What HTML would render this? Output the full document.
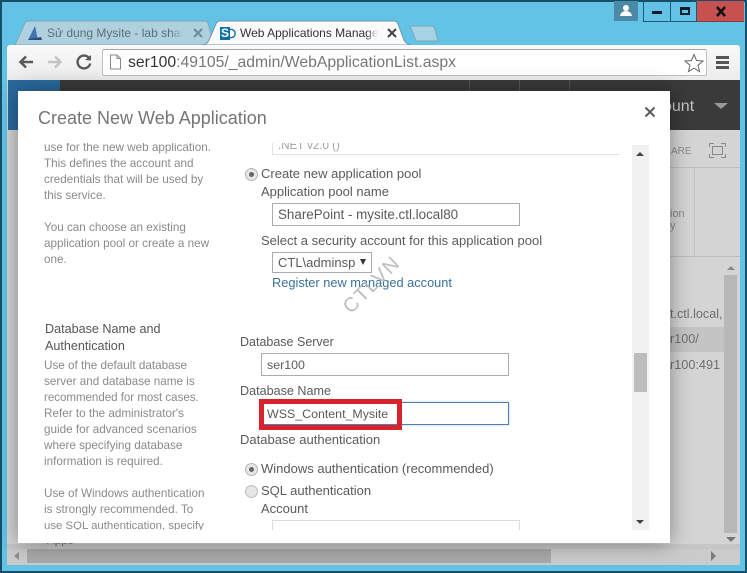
<!DOCTYPE html>
<html><head><meta charset="utf-8">
<style>
html,body{margin:0;padding:0;width:747px;height:573px;overflow:hidden;background:#62c3e6;}
*{box-sizing:border-box;}
body{font-family:"Liberation Sans","DejaVu Sans",sans-serif;position:relative;}
.a{position:absolute;}
.t{position:absolute;white-space:nowrap;font-size:12px;line-height:16px;color:#555;}
.d{color:#8a8a8a;font-size:11.7px;left:44px;}
.f{color:#5a5a5a;font-size:13px;}
.i{position:absolute;background:#fff;border:1px solid #ababab;}
</style></head><body>
<!-- window frame -->
<div class="a" style="left:0;top:0;width:747px;height:2px;background:#174e68"></div>
<div class="a" style="left:0;top:0;width:2px;height:573px;background:#174e68"></div>
<div class="a" style="right:0;top:0;width:2px;height:573px;background:#174e68"></div>
<div class="a" style="left:0;bottom:0;width:747px;height:2px;background:#174e68"></div>

<!-- window controls -->
<div class="a" style="left:614px;top:1px;width:24px;height:20px;background:#4b8aa6"></div>
<svg class="a" style="left:619px;top:4px" width="14" height="12" viewBox="0 0 14 12"><circle cx="7" cy="4" r="3" fill="#fff"/><path d="M1 12 Q2 7 7 7 Q12 7 13 12Z" fill="#fff"/></svg>
<div class="a" style="left:643px;top:1px;width:28px;height:21px;border:1px solid #1d5a78;border-top:0"></div>
<div class="a" style="left:652px;top:11px;width:10px;height:3px;background:#0f1e2c"></div>
<div class="a" style="left:671px;top:1px;width:26px;height:21px;border:1px solid #1d5a78;border-top:0;border-left:0"></div>
<div class="a" style="left:680px;top:7px;width:10px;height:8px;border:2px solid #0f1e2c;border-top-width:3px"></div>
<div class="a" style="left:697px;top:1px;width:47px;height:21px;background:#c75050;border-bottom:1px solid #8c3a3a"></div>
<svg class="a" style="left:715px;top:6px" width="12" height="11" viewBox="0 0 12 11"><path d="M2 1 L10 10 M10 1 L2 10" stroke="#111" stroke-width="2.6"/></svg>

<!-- tabs -->
<svg class="a" style="left:0;top:18px" width="450" height="30" viewBox="0 0 450 30">
<path d="M15 27 L25 5 Q26 3 29 3 L204 3 Q207 3 208 5 L214 27Z" fill="#aed0df" stroke="#7fa9bc"/>
<path d="M202 27 Q207 27 209 22 L216 6 Q217 3 220 3 L394 3 Q397 3 398 6 L404 22 Q406 26 411 27Z" fill="#fafafa" stroke="#6c96a9"/>
<path d="M411 10 Q408 8 412 8 L431 8 Q434 8 435 11 L438 23 L416 23Z" fill="#a6d2e4" stroke="#7ba7ba"/>
</svg>
<svg class="a" style="left:27px;top:25px" width="16" height="16" viewBox="0 0 16 16"><path d="M1 15 L8 1 L15 15Z" fill="#3f74b0"/><path d="M8 1 L11 15 L15 15Z" fill="#b9cfe6"/><path d="M2 14 L14 12 L15 15 L1 15Z" fill="#28507f"/></svg>
<div class="t" style="left:47px;top:25px;width:136px;overflow:hidden;font-size:12px;color:#5f6f78">Sử dụng Mysite - lab shar</div>
<div class="a" style="left:171px;top:25px;width:12px;height:16px;background:linear-gradient(90deg,rgba(174,208,223,0),#aed0df)"></div>
<svg class="a" style="left:193px;top:28px" width="10" height="10" viewBox="0 0 10 10"><path d="M1 1 L9 9 M9 1 L1 9" stroke="#6f8b99" stroke-width="2"/></svg>
<svg class="a" style="left:220px;top:27px" width="16" height="13" viewBox="0 0 16 13"><circle cx="11" cy="6.5" r="4.2" fill="#fff" stroke="#0f6fa8" stroke-width="1.4"/><rect x="0" y="0" width="10" height="13" fill="#0f6fa8"/></svg>
<div class="t" style="left:221px;top:25px;font-size:12px;font-weight:bold;color:#fff;line-height:16px">S</div>
<div class="t" style="left:240px;top:25px;width:138px;overflow:hidden;font-size:12px;color:#333">Web Applications Manage</div>
<div class="a" style="left:366px;top:25px;width:12px;height:16px;background:linear-gradient(90deg,rgba(250,250,250,0),#fafafa)"></div>
<svg class="a" style="left:387px;top:28px" width="10" height="10" viewBox="0 0 10 10"><path d="M1 1 L9 9 M9 1 L1 9" stroke="#444" stroke-width="2"/></svg>

<!-- toolbar -->
<div class="a" style="left:7px;top:45px;width:733px;height:35px;background:linear-gradient(#fafafa,#ececec);border-radius:3px 3px 0 0"></div>
<svg class="a" style="left:17px;top:53px" width="18" height="18" viewBox="0 0 18 18"><path d="M16 9 H4 M9 3.5 L3.5 9 L9 14.5" stroke="#5a5a5a" stroke-width="2.6" fill="none"/></svg>
<svg class="a" style="left:46px;top:53px" width="18" height="18" viewBox="0 0 18 18"><path d="M2 9 H14 M9 3.5 L14.5 9 L9 14.5" stroke="#c4c4c4" stroke-width="2.6" fill="none"/></svg>
<svg class="a" style="left:75px;top:53px" width="18" height="18" viewBox="0 0 18 18"><path d="M14 5 A6.4 6.4 0 1 0 15.2 10.5" stroke="#5a5a5a" stroke-width="2.4" fill="none"/><path d="M10 7 L16 7.5 L16 2Z" fill="#5a5a5a"/></svg>
<div class="a" style="left:102px;top:49px;width:605px;height:27px;background:#fff;border:1px solid #c0c0c0;border-top-color:#a5a5a5;border-radius:2px"></div>
<svg class="a" style="left:109px;top:54px" width="13" height="16" viewBox="0 0 13 16"><path d="M1.5 1 H8 L11.5 4.5 V15 H1.5Z M8 1 V4.5 H11.5" fill="#fff" stroke="#8a8a8a"/></svg>
<div class="t" style="left:128px;top:53px;font-size:15.75px;line-height:19px;color:#777"><span style="color:#333">ser100</span>:49105/_admin/WebApplicationList.aspx</div>
<svg class="a" style="left:684px;top:53px" width="20" height="20" viewBox="0 0 20 20"><path d="M10 1.5 L12.5 7.5 L19 8 L14 12.2 L15.6 18.6 L10 15.2 L4.4 18.6 L6 12.2 L1 8 L7.5 7.5Z" fill="#fff" stroke="#666"/></svg>
<div class="a" style="left:716px;top:56px;width:13px;height:3px;background:#555"></div>
<div class="a" style="left:716px;top:61px;width:13px;height:3px;background:#555"></div>
<div class="a" style="left:716px;top:66px;width:13px;height:3px;background:#555"></div>

<!-- page behind -->
<div class="a" style="left:7px;top:80px;width:733px;height:485px;background:#d4d4d4"></div>
<div class="a" style="left:8px;top:80px;width:52px;height:50px;background:#2a6a9e"></div>
<div class="a" style="left:60px;top:80px;width:680px;height:50px;background:#3a3a3a"></div>
<div class="a" style="left:469px;top:80px;width:1px;height:50px;background:#555"></div>
<div class="a" style="left:519px;top:80px;width:1px;height:50px;background:#555"></div>
<div class="a" style="left:569px;top:80px;width:1px;height:50px;background:#555"></div>
<div class="t" style="left:663px;top:98px;font-size:16px;line-height:18px;color:#c4c4c4">ount</div>
<div class="a" style="left:714px;top:103px;border:7px solid transparent;border-top:6px solid #9a9a9a;border-bottom:0"></div>
<div class="t" style="left:671px;top:144px;font-size:10px;color:#8a8a8a">ARE</div>
<svg class="a" style="left:709px;top:143px" width="17" height="15" viewBox="0 0 17 15"><rect x="3.5" y="3.5" width="10" height="8" fill="none" stroke="#8a8a8a"/><path d="M.5 4 V.5 H5 M12 .5 H16.5 V4 M16.5 11 V14.5 H12 M5 14.5 H.5 V11" fill="none" stroke="#8a8a8a"/></svg>
<div class="a" style="left:670px;top:167px;width:70px;height:1px;background:#bfbfbf"></div>
<div class="a" style="left:694px;top:168px;width:1px;height:88px;background:#c4c4c4"></div>
<div class="a" style="left:670px;top:256px;width:70px;height:1px;background:#bdbdbd"></div>
<div class="t" style="left:670px;top:208px;font-size:11px;line-height:12px;color:#888">ion<br>y</div>
<div class="a" style="left:670px;top:327px;width:55px;height:25px;background:#c4c4c4"></div>
<div class="t" style="left:670px;top:306px;font-size:12.6px;color:#6f6f6f">t.ctl.local,</div>
<div class="t" style="left:670px;top:331px;font-size:12.6px;color:#6f6f6f">r100/</div>
<div class="t" style="left:670px;top:357px;font-size:12.7px;color:#6f6f6f">r100:491</div>
<div class="a" style="left:724px;top:275px;width:13px;height:258px;background:#b8b8b8"></div>
<div class="a" style="left:727px;top:266px;border:4px solid transparent;border-bottom:4px solid #8a8a8a;border-top:0"></div>
<div class="a" style="left:726px;top:537px;border:5px solid transparent;border-top:5px solid #777;border-bottom:0"></div>
<!-- bottom scrollbar -->
<div class="a" style="left:7px;top:544px;width:733px;height:5px;background:#c6c6c6"></div>
<div class="a" style="left:7px;top:549px;width:733px;height:16px;background:#cbcbcb"></div>
<div class="a" style="left:27px;top:549px;width:524px;height:14px;background:#a8a8a8"></div>
<div class="a" style="left:14px;top:552px;border:4px solid transparent;border-right:5px solid #8e8e8e;border-left:0"></div>
<div class="a" style="left:711px;top:551px;border:5px solid transparent;border-left:5px solid #7a7a7a;border-right:0"></div>
<div class="t" style="left:47px;top:533px;font-size:11.7px;color:#777">Apps</div>

<!-- modal -->
<div class="a" style="left:18px;top:91px;width:652px;height:452px;background:#fff;box-shadow:0 0 20px rgba(0,0,0,.38)"></div>
<div class="t" style="left:38px;top:107px;font-size:18px;line-height:23px;color:#757575">Create New Web Application</div>
<svg class="a" style="left:644px;top:106px" width="12" height="12" viewBox="0 0 12 12"><path d="M1.5 1.5 L10.5 10.5 M10.5 1.5 L1.5 10.5" stroke="#5c5c5c" stroke-width="2"/></svg>

<!-- modal scrollbar -->
<div class="a" style="left:632px;top:145px;width:17px;height:385px;background:#f1f1f1"></div>
<div class="a" style="left:634px;top:353px;width:13px;height:39px;background:#bdbdbd"></div>
<div class="a" style="left:636px;top:152px;border:4px solid transparent;border-bottom:4px solid #444;border-top:0"></div>
<div class="a" style="left:636px;top:520px;border:4px solid transparent;border-top:4px solid #444;border-bottom:0"></div>

<!-- body -->
<div class="a" style="left:20px;top:131px;width:600px;height:399px;overflow:hidden;clip-path:inset(12px 0 0 0)">
<div class="t d" style="left:24px;top:9px">use for the new web application.</div>
<div class="t d" style="left:24px;top:25px">This defines the account and</div>
<div class="t d" style="left:24px;top:41px">credentials that will be used by</div>
<div class="t d" style="left:24px;top:57px">this service.</div>
<div class="t d" style="left:24px;top:89px">You can choose an existing</div>
<div class="t d" style="left:24px;top:105px">application pool or create a new</div>
<div class="t d" style="left:24px;top:121px">one.</div>
<div class="t" style="left:25px;top:190px;font-size:12.6px;line-height:17px;color:#555">Database Name and<br>Authentication</div>
<div class="t d" style="left:24px;top:227px">Use of the default database</div>
<div class="t d" style="left:24px;top:243px">server and database name is</div>
<div class="t d" style="left:24px;top:259px;font-size:11.5px">recommended for most cases.</div>
<div class="t d" style="left:24px;top:275px">Refer to the administrator's</div>
<div class="t d" style="left:24px;top:291px">guide for advanced scenarios</div>
<div class="t d" style="left:24px;top:307px">where specifying database</div>
<div class="t d" style="left:24px;top:323px">information is required.</div>
<div class="t d" style="left:24px;top:355px">Use of Windows authentication</div>
<div class="t d" style="left:24px;top:371px">is strongly recommended. To</div>
<div class="t d" style="left:24px;top:387px;font-size:11.4px">use SQL authentication, specify</div>

<!-- right form, offset -20,-131 -->
<div class="a" style="left:252px;top:8px;width:350px;height:16px;border:1px solid #e4e4e4;border-top:0"></div>
<div class="t" style="left:258px;top:7px;font-size:11.5px;color:#a0a0a0">.NET v2.0 ()</div>
<div class="a" style="left:225px;top:37px;width:13px;height:13px;border-radius:50%;background:#e6e6e6;border:1px solid #b5b5b5"></div>
<div class="a" style="left:229px;top:41px;width:5px;height:5px;border-radius:50%;background:#666"></div>
<div class="t f" style="left:241px;top:35px">Create new application pool</div>
<div class="t f" style="left:241px;top:53px">Application pool name</div>
<div class="i" style="left:252px;top:72px;width:248px;height:23px"></div>
<div class="t f" style="left:258px;top:76px;font-size:13.4px">SharePoint - mysite.ctl.local80</div>
<div class="t f" style="left:241px;top:102px">Select a security account for this application pool</div>
<div class="i" style="left:252px;top:121px;width:100px;height:21px"></div>
<div class="t f" style="left:258px;top:124px">CTL\adminsp</div>
<div class="a" style="left:340px;top:128px;border:3px solid transparent;border-top:6px solid #333;border-bottom:0"></div>
<div class="t f" style="left:252px;top:144px;color:#3a7296;font-size:12.8px">Register new managed account</div>
<div class="t f" style="left:220px;top:203px;font-size:12.5px">Database Server</div>
<div class="i" style="left:241px;top:222px;width:248px;height:23px"></div>
<div class="t f" style="left:247px;top:226px;font-size:12.4px">ser100</div>
<div class="t f" style="left:220px;top:252px;font-size:12.6px">Database Name</div>
<div class="a" style="left:241px;top:271px;width:248px;height:23px;background:#fff;border:1px solid #4d7fb0;box-shadow:0 0 2px #a8c6e2"></div>
<div class="a" style="left:239px;top:268px;width:143px;height:31px;border:5px solid #d8222c"></div>
<div class="t f" style="left:247px;top:275px;font-size:12.4px">WSS_Content_Mysite</div>
<div class="t f" style="left:220px;top:301px">Database authentication</div>
<div class="a" style="left:225px;top:332px;width:13px;height:13px;border-radius:50%;background:#e6e6e6;border:1px solid #b5b5b5"></div>
<div class="a" style="left:229px;top:336px;width:5px;height:5px;border-radius:50%;background:#666"></div>
<div class="t f" style="left:241px;top:330px">Windows authentication (recommended)</div>
<div class="a" style="left:225px;top:354px;width:13px;height:13px;border-radius:50%;background:#e6e6e6;border:1px solid #bbb"></div>
<div class="t f" style="left:241px;top:352px">SQL authentication</div>
<div class="t f" style="left:241px;top:370px">Account</div>
<div class="a" style="left:252px;top:389px;width:248px;height:20px;border:1px solid #dcdcdc;border-bottom:0"></div>
</div>

<!-- watermark -->
<div class="t" style="left:372px;top:285px;font-size:20px;line-height:24px;letter-spacing:1.5px;color:#bdbdbd;transform:translate(-50%,-50%) rotate(-45deg)">CTLVN</div>
</body></html>
